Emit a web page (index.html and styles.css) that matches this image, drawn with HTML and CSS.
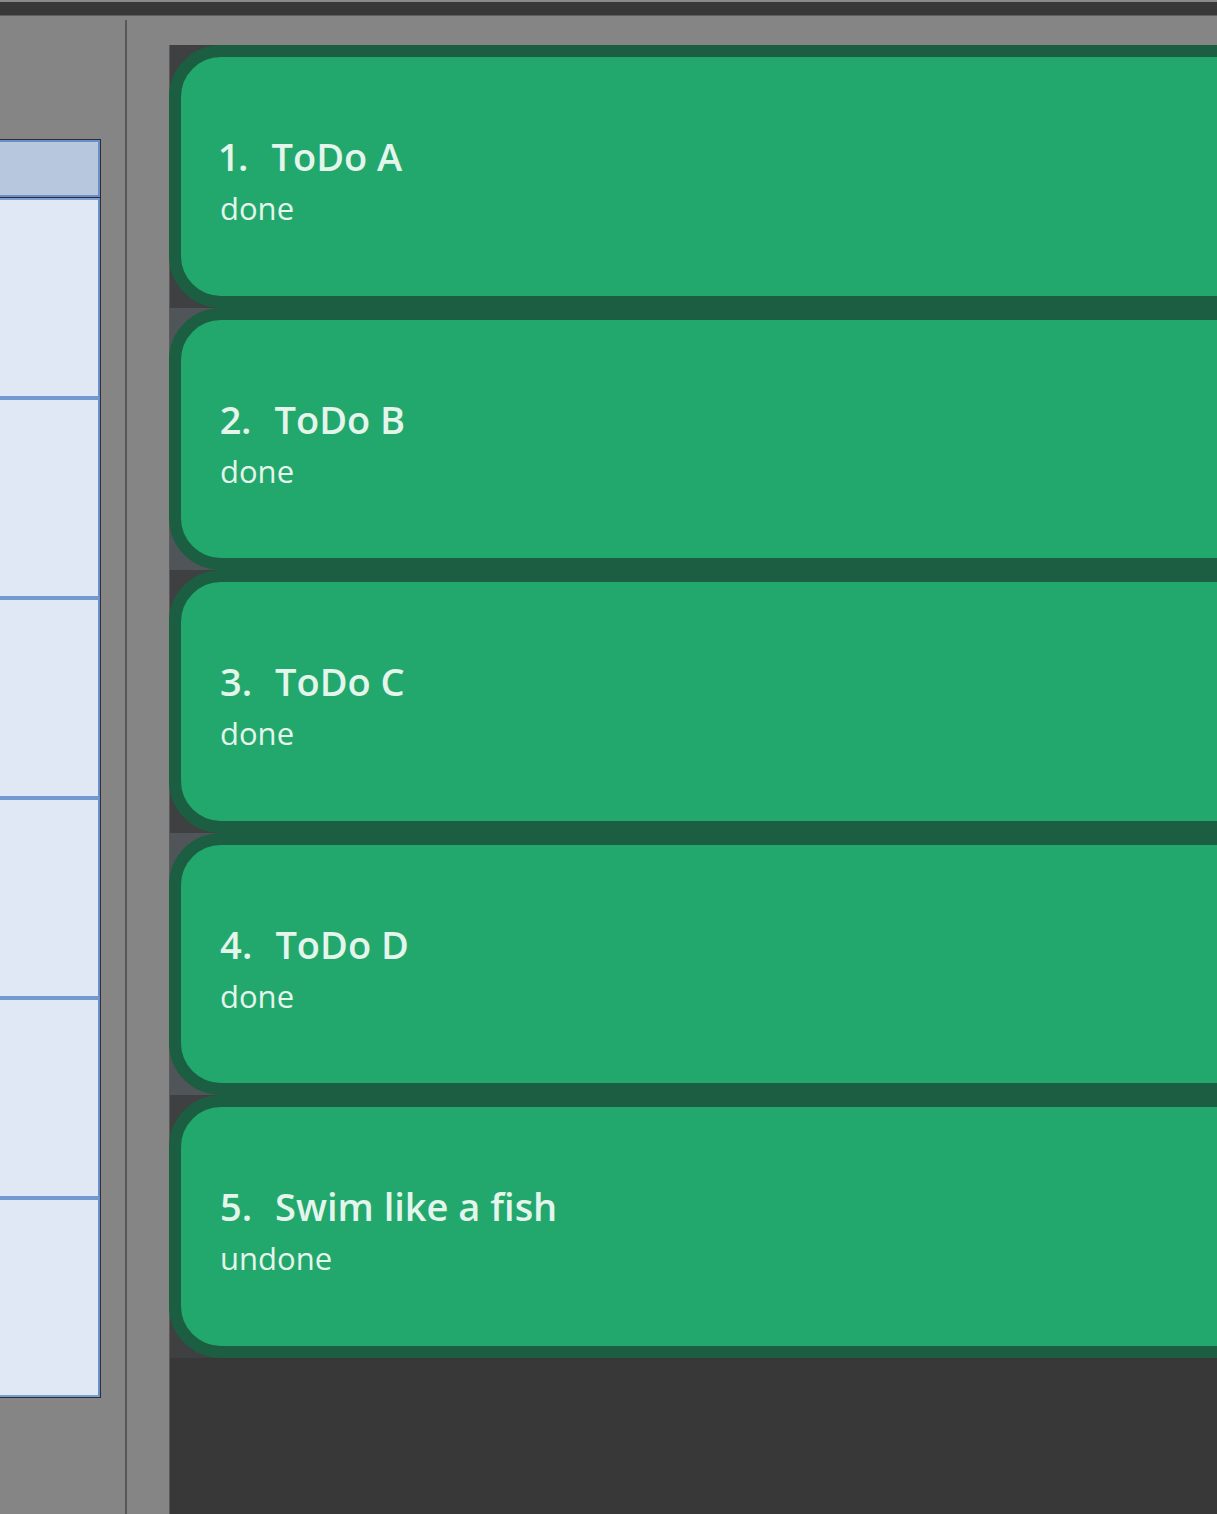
FILE: index.html
```html
<!DOCTYPE html>
<html>
<head>
<meta charset="utf-8">
<link rel="stylesheet" href="styles.css">
</head>
<body>
<div class="topbar"></div>
<div class="main">
  <div class="left">
    <div class="table">
      <div class="thead"></div>
      <div class="tbody">
        <div class="trow"></div>
        <div class="trow"></div>
        <div class="trow"></div>
        <div class="trow"></div>
        <div class="trow"></div>
        <div class="trow last"></div>
      </div>
    </div>
  </div>
  <div class="divider"></div>
  <div class="right">
    <div class="list">
      <div class="cell odd">
        <div class="card">
          <div class="title"><span class="idx">1.</span><span class="name">ToDo A</span></div>
          <div class="status">done</div>
        </div>
      </div>
      <div class="cell even">
        <div class="card">
          <div class="title"><span class="idx">2.</span><span class="name">ToDo B</span></div>
          <div class="status">done</div>
        </div>
      </div>
      <div class="cell odd">
        <div class="card">
          <div class="title"><span class="idx">3.</span><span class="name">ToDo C</span></div>
          <div class="status">done</div>
        </div>
      </div>
      <div class="cell even">
        <div class="card">
          <div class="title"><span class="idx">4.</span><span class="name">ToDo D</span></div>
          <div class="status">done</div>
        </div>
      </div>
      <div class="cell odd">
        <div class="card">
          <div class="title"><span class="idx">5.</span><span class="name">Swim like a fish</span></div>
          <div class="status">undone</div>
        </div>
      </div>
    </div>
  </div>
</div>
</body>
</html>
```
FILE: styles.css
```css
html, body {
  margin: 0;
  padding: 0;
}
body {
  width: 1217px;
  height: 1514px;
  overflow: hidden;
  background: #858585;
  font-family: "Open Sans", "Noto Sans", sans-serif;
}
.topbar {
  height: 13px;
  background: #383838;
  border-top: 2px solid #8a8a8a;
  border-bottom: 1px solid #5f5f5f;
}
.main {
  display: flex;
  height: 1498px;
}
.left {
  width: 125px;
  flex: none;
  padding-top: 123px;
  box-sizing: border-box;
}
.table {
  width: 101px;
  border-top: 1px solid #2e2e2e;
  border-right: 1px solid #2e2e2e;
  border-bottom: 1px solid #2e2e2e;
  box-sizing: border-box;
}
.thead {
  height: 53px;
  background: #b7c7dd;
  border: 2px solid #6b8dc9;
  border-left: none;
  border-bottom: 2px solid #6b8dc9;
}
.tbody {
  border-top: 1px solid #2e2e2e;
}
.trow {
  height: 196px;
  background: #e1e8f5;
  border-top: 2px solid #7399d0;
  border-right: 2px solid #6b8dc9;
  border-bottom: 2px solid #7399d0;
}
.trow:first-child {
  border-top: 2px solid #7a9dd2;
}
.trow.last {
  height: 195px;
  border-bottom: 2px solid #7a9dd2;
}
.divider {
  width: 2px;
  flex: none;
  margin-top: 4px;
  background: #575757;
}
.right {
  flex: 1;
  min-width: 0;
  padding: 29px 0 0 42px;
  overflow: hidden;
}
.list {
  width: 1200px;
  height: 100%;
  background: #383838;
  border-left: 1px solid #5a5a5a;
  box-sizing: border-box;
}
.cell {
  height: 262.5px;
  box-sizing: border-box;
}
.cell.odd {
  background: #3f4042;
}
.cell.even {
  background: #4f5558;
}
.card {
  height: 100%;
  box-sizing: border-box;
  background: #22a86d;
  border: 12.5px solid #1c5e41;
  border-radius: 52px;
  padding: 74px 0 0 39px;
  margin-left: -1px;
  display: flex;
  flex-direction: column;
  justify-content: flex-start;
  color: #e4f5ec;
}
.title {
  display: flex;
  gap: 23px;
  font-size: 38px;
  font-weight: 600;
  line-height: 50px;
  font-variant-numeric: proportional-nums;
}
.status {
  font-size: 31px;
  line-height: 50px;
  margin-top: 2px;
}
```
